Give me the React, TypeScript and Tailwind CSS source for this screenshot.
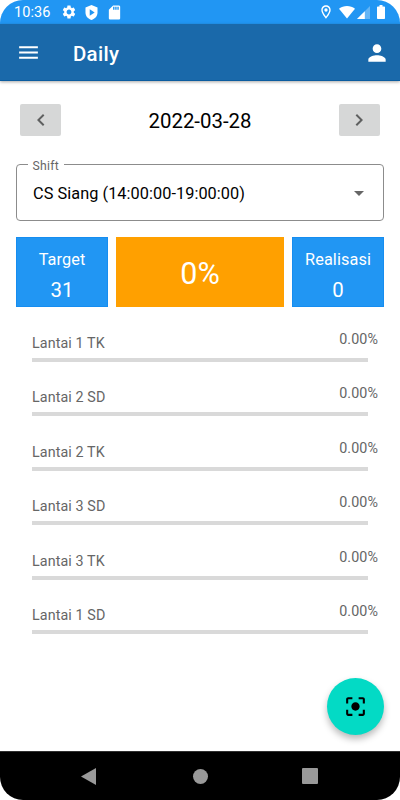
import {
  MdArrowDropDown,
  MdCenterFocusStrong,
  MdChevronLeft,
  MdChevronRight,
  MdMenu,
  MdPerson,
  MdSdCard,
  MdSettings,
} from "react-icons/md";

const areas = [
  { name: "Lantai 1 TK", progress: 0 },
  { name: "Lantai 2 SD", progress: 0 },
  { name: "Lantai 2 TK", progress: 0 },
  { name: "Lantai 3 SD", progress: 0 },
  { name: "Lantai 3 TK", progress: 0 },
  { name: "Lantai 1 SD", progress: 0 },
];

function StatusBar() {
  return (
    <div className="flex h-6 items-center bg-[#2196f3] pr-[15px] pl-[14px] text-white">
      <span className="w-[47px] pt-[3px] text-[14.5px] leading-none tracking-[0.1px]">10:36</span>
      <MdSettings className="size-[16px]" />
      <svg viewBox="0 0 24 24" className="ml-[6px] size-[17px]" fill="currentColor">
        <path
          fillRule="evenodd"
          d="M12 1.5 20.5 5v7c0 5-3.5 9-8.5 10.5C7 21 3.500 17 3.500 12V5L12 1.500zM9.500 7.500v9l7-4.500-7-4.500z"
        />
      </svg>
      <MdSdCard className="ml-[6px] size-[17px]" />

      {/* Right side */}
      <div className="ml-auto flex items-center">
        <svg viewBox="0 0 24 24" className="size-[16px]" fill="currentColor">
          <path
            fillRule="evenodd"
            d="M12 2C8.130 2 5 5.130 5 9c0 5.250 7 13 7 13s7-7.750 7-13c0-3.870-3.130-7-7-7zM7 9c0-2.760 2.240-5 5-5s5 2.240 5 5c0 2.880-2.880 7.190-5 9.880C9.920 16.210 7 11.850 7 9z"
          />
          <circle cx="12" cy="9" r="2.500" />
        </svg>
        <svg viewBox="0 0 16 13" className="ml-[5px] h-[13px] w-[16px]" fill="currentColor">
          <path d="M0 2.700C2.300 1 5 0 8 0s5.700 1 8 2.700L8 12.600z" />
        </svg>
        <svg viewBox="0 0 13 13" className="ml-[2px] size-[13px]" fill="currentColor">
          <path d="M13 0v13H0z" opacity="0.3" />
          <path d="M7.800 5.200V13H0z" />
        </svg>
        <svg viewBox="0 0 8 14" className="ml-[7px] h-[14px] w-[8px]" fill="currentColor">
          <path d="M2.500 0h3v1.400H7.200c.5 0 .8.300.8.800v11c0 .5-.3.800-.8.800H.8c-.5 0-.8-.3-.8-.8v-11c0-.5.3-.8.8-.8h1.700z" />
        </svg>
      </div>
    </div>
  );
}

function StatCard({ label, value }: { label: string; value: number }) {
  return (
    <div className="flex w-[92px] flex-col items-center border border-[#168df0] bg-[#2196f3] pt-[11px] text-white">
      <span className="text-[16.3px] leading-[22px] tracking-[0.1px]">{label}</span>
      <span className="mt-[5px] text-[20.4px] leading-[28px]">{value}</span>
    </div>
  );
}

export default function App() {
  return (
    <div className="h-[800px] w-[400px] bg-white font-['Roboto',sans-serif]">
      <div className="relative flex h-full flex-col overflow-hidden rounded-[23px] bg-white">
        <StatusBar />

        {/* App bar */}
        <header className="flex h-[57px] shrink-0 items-center border-b border-[#0b5c9f] bg-[#1a69aa] pr-[10px] pl-4 text-white shadow-[0_1px_3px_rgba(0,0,0,0.35)]">
          <MdMenu className="size-[25px]" />
          <h1 className="ml-8 pt-[4px] text-[20.4px] font-medium tracking-[0.3px]">Daily</h1>
          <MdPerson className="mt-[2px] ml-auto size-[26px]" />
        </header>

        <main className="flex grow flex-col px-4">
          {/* Date picker */}
          <div className="mt-[23px] flex items-center justify-between px-1">
            <button className="flex h-8 w-[41px] items-center justify-center rounded-[2px] bg-[#d6d7d7] text-[#5f6060]">
              <MdChevronLeft className="size-6" />
            </button>
            <span className="pt-[2px] text-[20.4px] leading-none text-black">2022-03-28</span>
            <button className="flex h-8 w-[41px] items-center justify-center rounded-[2px] bg-[#d6d7d7] text-[#5f6060]">
              <MdChevronRight className="size-6" />
            </button>
          </div>

          {/* Shift select */}
          <fieldset className="mt-[19px] h-[66px] rounded-[4px] border border-[#8c8c8c] pr-3 pl-[11px]">
            <legend className="px-[4.5px] pt-[4px] text-[12.2px] leading-[15px] tracking-[0.3px] text-[#666]">
              Shift
            </legend>
            <div className="flex h-[41px] items-center justify-between pl-[5px]">
              <span className="text-[16.3px] tracking-[0.06px] text-black">
                CS Siang (14:00:00-19:00:00)
              </span>
              <MdArrowDropDown className="-mt-[4px] size-6 text-[#666]" />
            </div>
          </fieldset>

          {/* Summary */}
          <div className="mt-4 flex h-[70px] gap-2">
            <StatCard label="Target" value={31} />
            <div className="flex grow items-center justify-center bg-[#ffa000] pt-[3px] text-[30.5px] text-white">
              0%
            </div>
            <StatCard label="Realisasi" value={0} />
          </div>

          {/* Areas */}
          <div className="mt-[24px] pl-4">
            {areas.map((area) => (
              <div key={area.name} className="h-[54.4px]">
                <div className="flex h-[27px] justify-between pr-[6px] text-[14.3px] leading-[17px] tracking-[0.1px] text-[#666]">
                  <span className="pt-[4px]">{area.name}</span>
                  <span>{area.progress.toFixed(2)}%</span>
                </div>
                <div className="mr-4 h-[4px] bg-[#d9d9d9]">
                  <div className="h-full bg-[#2196f3]" style={{ width: `${area.progress}%` }} />
                </div>
              </div>
            ))}
          </div>
        </main>

        <button className="absolute right-[16px] bottom-[65px] flex size-[57px] items-center justify-center rounded-full bg-[#03dac5] text-black shadow-[0_4px_7px_rgba(0,0,0,0.28)]">
          <MdCenterFocusStrong className="size-[25px]" />
        </button>

        {/* System navigation */}
        <nav className="flex h-[49px] shrink-0 items-center border-t border-[#303030] bg-black pr-[82px] pl-[81px] text-[#999]">
          <svg viewBox="0 0 15 17" className="h-[17px] w-[15px]" fill="currentColor">
            <path d="M15 0v17L0 8.500z" />
          </svg>
          <div className="mr-auto ml-[97px] size-[15px] rounded-full bg-[#999]" />
          <div className="size-[16px] rounded-[1px] bg-[#999]" />
        </nav>
      </div>
    </div>
  );
}
